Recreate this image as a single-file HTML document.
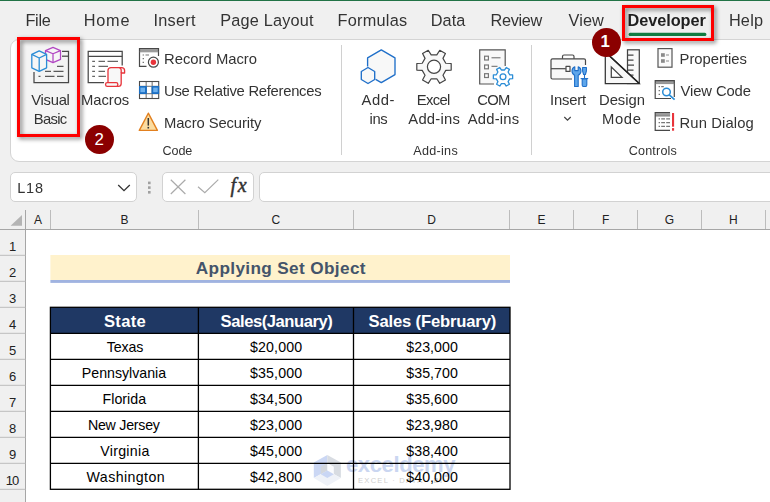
<!DOCTYPE html>
<html lang="en">
<head>
<meta charset="utf-8">
<title>Developer tab - Visual Basic</title>
<style>
html,body{margin:0;padding:0}
body{width:770px;height:502px;overflow:hidden;background:#f0f0f0;position:relative;font-family:"Liberation Sans",sans-serif;color:#333}
.abs{position:absolute}
.t{position:absolute;white-space:nowrap;line-height:1;font-size:14.8px}
#gfx{position:absolute;left:0;top:0;width:770px;height:502px}
.ribbon{left:10px;top:39px;width:790px;height:123px;background:#fff;border:1px solid #d4d4d4;border-radius:9px;box-sizing:border-box}
.box{background:#fff;border:1px solid #d2d2d2;border-radius:5px;box-sizing:border-box;top:172px;height:30px}
.sheet{left:26px;top:230px;width:744px;height:272px;background:#fff}
.red{border:3.3px solid #fe0000;box-sizing:border-box;filter:drop-shadow(2.2px 2.2px 2px rgba(0,0,0,.5))}
.circ{border-radius:50%;background:#8b0000;color:#fff;text-align:center;font-weight:400}
.gs{position:absolute;left:0;top:0;width:770px;height:206px;will-change:transform}
.wm{position:absolute;white-space:nowrap;line-height:1}
</style>
</head>
<body>
<div class="abs" style="left:0;top:0;width:770px;height:1.3px;background:#217346"></div>
<div class="abs ribbon"></div>
<div class="abs" style="left:20px;top:40px;width:57px;height:94px;background:#f4f4f4"></div>
<div class="abs box" style="left:10px;width:127px"></div>
<div class="abs box" style="left:162px;width:92px"></div>
<div class="abs box" style="left:259px;width:540px"></div>
<div class="abs sheet"></div>

<svg id="gfx" viewBox="0 0 770 502" fill="none">
<!-- tab underline -->
<rect x="628.6" y="32.8" width="77.8" height="3.1" rx="1.5" fill="#107c41"/>
<!-- group separators -->
<rect x="341" y="45" width="1" height="110" fill="#d0d0d0"/>
<rect x="531" y="45" width="1" height="110" fill="#d0d0d0"/>

<!-- Visual Basic icon -->
<g stroke="#484848" stroke-width="1.25">
<path d="M62 51.4H68.5V82.6H34V72"/>
<path d="M62 56.2H68.5"/>
<path d="M57 66.4H63.5M45 71.4H51M53.5 71.4H63.5M38.5 76.4H40.5M45 76.4H54.5M57 76.4H63.5" stroke="#5a5a5a"/>
</g>
<g stroke="#b146c2" stroke-width="1.25" stroke-linejoin="round" fill="#f6f6f6">
<path d="M53 47.4L60.5 50.6V59.4L53 62.6L45.5 59.4V50.6Z"/>
<path d="M45.5 50.6L53 53.8L60.5 50.6M53 53.8V62.6" fill="none"/>
</g>
<g stroke="#2b8dd6" stroke-width="1.3" stroke-linejoin="round" fill="#f6f6f6">
<path d="M39.2 50.8L46.6 54.4V67.8L39.2 71.4L31.8 67.8V54.4Z"/>
<path d="M31.8 54.4L39.2 58L46.6 54.4M39.2 58V71.4" fill="none"/>
</g>

<!-- Macros icon -->
<g stroke="#484848" stroke-width="1.25">
<path d="M104 82.7H88.2V51.3H122.2V65.5"/>
<path d="M88.2 56.3H122.2"/>
<path d="M92.2 61.4H95M98.5 61.4H105M107.5 61.4H118M92.2 66.4H95M98.5 66.4H108M92.2 71.4H95M98.5 71.4H105M92.2 76.4H95M98.5 76.4H106" stroke="#666"/>
</g>
<g stroke="#e8343b" stroke-width="1.3" stroke-linejoin="round" fill="#f8f8f8">
<path d="M108 82.7V70.5Q108 67.6 111 67.6H121.5Q124.6 67.6 124.6 70.5V73H121.2V83.5Q121.2 86.4 118.3 86.4H108.5"/>
<path d="M121.2 73V70.5Q121.2 67.6 119 67.6" fill="none"/>
<rect x="105.6" y="82.7" width="12.2" height="3.7" rx="1.6"/>
</g>

<!-- Record Macro icon -->
<g stroke="#484848" stroke-width="1.2">
<rect x="139.5" y="48.5" width="19" height="3" fill="#9a9a9a" stroke="none"/>
<path d="M146.5 66.3H139.5V48.5H158.5V56"/>
<path d="M139.5 51.8H158.5" stroke="#777" stroke-width="0.8"/>
<path d="M142.6 55H144M145.5 55H149M142.6 58.7H144M142.6 62.3H144" stroke="#777"/>
<circle cx="153.4" cy="62.2" r="5" fill="#fff"/>
<circle cx="153.4" cy="62.2" r="2.7" fill="#e8343b" stroke="none"/>
</g>

<!-- Relative references icon -->
<g>
<rect x="139.5" y="81.5" width="19.2" height="17" fill="#fff" stroke="#4a4a4a" stroke-width="1.1"/>
<path d="M146.2 82V98M152.2 82V98M140 86.4H158.5M140 93.7H158.5" stroke="#8c8c8c" stroke-width="1.3"/>
<rect x="139" y="86" width="7.9" height="8" fill="#1b6ec2"/>
<rect x="151.5" y="86" width="7.7" height="8" fill="#1b6ec2"/>
<rect x="140.4" y="87.6" width="4.6" height="4.6" fill="#6db1ee"/>
<rect x="153.2" y="87.6" width="4.5" height="4.6" fill="#6db1ee"/>
</g>

<!-- Macro security icon -->
<path d="M148.3 113.2L157.4 130.4H139.3Z" fill="#fbdca0" stroke="#e2801f" stroke-width="1.4" stroke-linejoin="round"/>
<path d="M148.3 118V125.6" stroke="#333" stroke-width="1.5"/>
<rect x="147.5" y="126.9" width="1.6" height="1.6" fill="#333"/>

<!-- Add-ins icon -->
<g stroke="#1f6fc9" stroke-width="1.35" stroke-linejoin="round" fill="#f8f8f8">
<path d="M381.3 82.6L395 74.6V57.9L381.3 49.9L367.6 57.9V74.6Z" stroke="none"/>
<path d="M375.6 79.4L381.3 82.6L395 74.6V57.9L381.3 49.9L367.6 57.9V66.6" fill="none"/>
<path d="M368 67.5L374.7 71.5V79.5L368 83.5L361.3 79.5V71.5Z"/>
</g>

<!-- Excel add-ins gear -->
<path d="M445.78 63.24 L451.19 63.52 L451.19 70.08 L445.78 70.36 L442.97 75.22 L445.43 80.05 L439.76 83.33 L436.81 78.78 L431.19 78.78 L428.24 83.33 L422.57 80.05 L425.03 75.22 L422.22 70.36 L416.81 70.08 L416.81 63.52 L422.22 63.24 L425.03 58.38 L422.57 53.55 L428.24 50.27 L431.19 54.82 L436.81 54.82 L439.76 50.27 L445.43 53.55 L442.97 58.38 Z" fill="#f8f8f8" stroke="#444" stroke-width="1.2" stroke-linejoin="round"/>
<circle cx="434" cy="66.8" r="6.6" fill="#fff" stroke="#444" stroke-width="1.2"/>

<!-- COM add-ins -->
<g stroke="#555" stroke-width="1.2">
<path d="M494 84H479.7V49.8H505.2V66" fill="#f8f8f8"/>
<path d="M491.5 57.8H500.5M491.5 66.3H497.5" stroke="#666" stroke-width="1"/>
<rect x="484.6" y="56.2" width="3.8" height="3.8" stroke="#777" fill="#fff"/>
<rect x="484.6" y="65" width="3.8" height="3.8" stroke="#777" fill="#fff"/>
<rect x="484.6" y="73.7" width="3.8" height="3.8" stroke="#777" fill="#fff"/>
</g>
<path d="M509.70 74.78 L512.63 74.96 L512.63 78.64 L509.70 78.82 L508.10 81.59 L509.40 84.22 L506.22 86.05 L504.60 83.62 L501.40 83.62 L499.78 86.05 L496.60 84.22 L497.90 81.59 L496.30 78.82 L493.37 78.64 L493.37 74.96 L496.30 74.78 L497.90 72.01 L496.60 69.38 L499.78 67.55 L501.40 69.98 L504.60 69.98 L506.22 67.55 L509.40 69.38 L508.10 72.01 Z" fill="#fff" stroke="#2b8dd6" stroke-width="1.3" stroke-linejoin="round"/>
<circle cx="503" cy="76.8" r="2.9" fill="#fff" stroke="#2b8dd6" stroke-width="1.3"/>

<!-- Insert (toolbox) -->
<g stroke="#484848" stroke-width="1.2" stroke-linejoin="round">
<path d="M572 79H552.5Q551 79 551 77.5V60.3Q551 58.8 552.5 58.8H584Q585.5 58.8 585.5 60.3V65" fill="#f8f8f8"/>
<path d="M562.5 58.8V56.5Q562.5 55 564 55H572.5Q574 55 574 56.5V58.8"/>
<path d="M551 68.7H565.8"/>
<rect x="566" y="66.4" width="4" height="5" fill="#fff"/>
</g>
<g stroke="#1f6fc9" stroke-width="1.1" fill="#5ea6ea" stroke-linejoin="round">
<path d="M574.6 86.5V75.2Q572 74 572 71Q572 68 574.8 66.8V70.6H578.2V66.8Q581 68 581 71Q581 74 578.2 75.2V86.5Z"/>
<path d="M582.6 67.5H586.4V71L585.4 74.5H583.6L582.6 71Z"/>
<path d="M584.5 74.5V78.5" />
<path d="M580.6 78.6H588.2"/>
<path d="M582.2 79V85Q582.2 86.5 583.4 86.5H585.6Q586.8 86.5 586.8 85V79Z"/>
</g>

<!-- Design mode -->
<g stroke="#444" stroke-width="1.25">
<rect x="627.5" y="49.8" width="11.8" height="33.7" fill="#f8f8f8"/>
<path d="M627.5 55H633.5M627.5 60H633.5M627.5 65H634M627.5 70H633.5M627.5 75H633.5"/>
<path d="M605.3 52V83.5H639.3Z" fill="#f8f8f8" stroke="#333"/>
<path d="M605.3 52L639.3 83.5" stroke="#222" stroke-width="1.6"/>
<path d="M611.3 67V77.3H622Z" fill="#fff"/>
</g>

<!-- Properties icon -->
<rect x="658" y="48.6" width="14" height="18.6" fill="#fafafa" stroke="#555" stroke-width="1.2"/>
<rect x="661" y="53.2" width="3.8" height="3.6" fill="#8a8a8a"/>
<rect x="661" y="59.2" width="3.8" height="3.6" fill="#8a8a8a"/>
<path d="M666 55H669M666 61H669" stroke="#8a8a8a" stroke-width="1.2"/>

<!-- View code icon -->
<g stroke="#484848" stroke-width="1.2">
<rect x="655.2" y="80.6" width="19.1" height="2.8" fill="#9a9a9a" stroke="none"/>
<path d="M671 98.5H655.2V80.6H674.3V97"/>
<path d="M655.2 83.6H674.3" stroke="#777" stroke-width="0.8"/>
<path d="M658.6 86.6H660M661.2 86.6H663.8M658.6 90.7H660M658.6 94.3H660" stroke="#777"/>
<circle cx="666.5" cy="92" r="3.8" fill="#fff" stroke="#2b8dd6" stroke-width="1.5"/>
<path d="M669.3 94.8L674.6 99.6" stroke="#2b8dd6" stroke-width="1.7"/>
</g>

<!-- Run dialog icon -->
<g stroke="#484848" stroke-width="1.2">
<rect x="655.2" y="112.5" width="14.9" height="2.8" fill="#9a9a9a" stroke="none"/>
<path d="M670 112.5H655.2V130.4H670"/>
<path d="M655.2 115.9H670.1" stroke-width="0.9"/>
<path d="M658.6 118.9H660M661.2 118.9H665M666.2 118.9H670M658.6 122.7H660M661.2 122.7H665M666.2 122.7H670M658.6 126.3H660M661.2 126.3H665M666.2 126.3H670" stroke="#777"/>
<rect x="672" y="113" width="2.1" height="13.7" fill="#e8343b" stroke="none"/>
<rect x="672" y="128.1" width="2.1" height="2.6" fill="#e8343b" stroke="none"/>
</g>

<!-- Insert chevron -->
<path d="M564.3 117L567.5 120.2L570.7 117" stroke="#444" stroke-width="1.2"/>

<!-- name box chevron -->
<path d="M118.2 185L124 190.7L129.8 185" stroke="#333" stroke-width="1.3"/>
<!-- dots -->
<rect x="148" y="181.6" width="2.6" height="2.6" fill="#a0a0a0"/>
<rect x="148" y="186.3" width="2.6" height="2.6" fill="#a0a0a0"/>
<rect x="148" y="191" width="2.6" height="2.6" fill="#a0a0a0"/>
<!-- cancel / enter -->
<path d="M170.8 179.8L185.4 194M185.4 179.8L170.8 194" stroke="#ababab" stroke-width="1.2"/>
<path d="M198 186.8L204.8 192.6L218.3 179.6" stroke="#ababab" stroke-width="1.2"/>

<!-- sheet headers -->
<rect x="0" y="229" width="770" height="1" fill="#a6a6a6"/>
<rect x="25" y="210" width="1" height="292" fill="#a6a6a6"/>
<path d="M22 215V225.8H10.6Z" fill="#b4b4b4"/>
<g fill="#bcbcbc">
<rect x="50" y="210" width="1" height="19"/>
<rect x="198" y="210" width="1" height="19"/>
<rect x="353" y="210" width="1" height="19"/>
<rect x="509" y="210" width="1" height="19"/>
<rect x="573" y="210" width="1" height="19"/>
<rect x="637" y="210" width="1" height="19"/>
<rect x="701" y="210" width="1" height="19"/>
<rect x="765" y="210" width="1" height="19"/>
<rect x="0" y="254.8" width="25.5" height="1"/><rect x="0" y="280.8" width="25.5" height="1"/><rect x="0" y="306.8" width="25.5" height="1"/><rect x="0" y="332.8" width="25.5" height="1"/><rect x="0" y="358.8" width="25.5" height="1"/><rect x="0" y="384.8" width="25.5" height="1"/><rect x="0" y="410.8" width="25.5" height="1"/><rect x="0" y="436.8" width="25.5" height="1"/><rect x="0" y="462.8" width="25.5" height="1"/><rect x="0" y="488.8" width="25.5" height="1"/>
</g>

<!-- title cell -->
<rect x="50.4" y="255" width="459.6" height="25.2" fill="#fff2cc"/>
<rect x="50.4" y="280" width="459.6" height="2.9" fill="#a0b3e0"/>

<!-- watermark logo -->
<g>
<path d="M327.3 455L313.8 462.5V478L327.3 470.5Z" fill="#cbd7f4"/>
<path d="M327.3 455L340.9 462.5V478L327.3 470.5Z" fill="#d8dce2"/>
<path d="M313.8 478L327.3 470.5L340.9 478L327.3 486Z" fill="#eff2f8"/>
<path d="M320.8 466.7L327.3 463V470.5L320.8 474.2Z" fill="#d3d7dd"/>
<path d="M327.3 463L333.8 466.7V474.2L327.3 470.5Z" fill="#fbfcfe"/>
<path d="M320.8 474.2L327.3 470.5L333.8 474.2L327.3 478Z" fill="#c9d6f4"/>
</g>

</svg>

<!-- watermark -->
<span class="wm" style="left:346px;top:454.2px;font-size:22px;font-weight:700;color:#cad6f1;letter-spacing:-0.38px">exceldemy</span>
<span class="wm" style="left:358px;top:476.6px;font-size:7.6px;color:#cfcfcf;letter-spacing:1.25px">EXCEL · DATA · BI</span>

<svg class="abs" style="left:0;top:0;width:770px;height:502px" viewBox="0 0 770 502" fill="none">
<rect x="50.4" y="307.3" width="459.6" height="26" fill="#1f3864"/>
<g stroke="#000" stroke-width="1.3">
<rect x="50.4" y="307.3" width="459.6" height="182"/>
<path d="M198.4 307.3V489.3M353.5 307.3V489.3"/>
<path d="M50.4 333.3H510M50.4 359.3H510M50.4 385.3H510M50.4 411.3H510M50.4 437.3H510M50.4 463.3H510"/>
</g>

</svg>

<!-- annotation boxes -->
<div class="abs red" style="left:16.9px;top:37px;width:63.3px;height:99.6px"></div>
<div class="abs red" style="left:622px;top:5px;width:92px;height:35.6px"></div>
<div class="abs circ" style="left:592px;top:27.8px;width:29.2px;height:29.2px"></div>
<div class="abs circ" style="left:84.9px;top:124.9px;width:29.3px;height:29.3px"></div>
<span class="t" style="left:600.6px;top:33.8px;font-size:16.8px;font-weight:700;color:#fff">1</span>
<span class="t" style="left:94.5px;top:131.5px;font-size:16.9px;color:#fff">2</span>

<span class="t" style="left:230.6px;top:174.9px;font-size:20px;font-family:'Liberation Serif',serif;font-style:italic;color:#333;letter-spacing:1.6px;-webkit-text-stroke:0.45px #333">fx</span>

<div class="gs">
<span class="t" style="left:25.50px;top:12.15px;font-size:16.3px;letter-spacing:-0.327px;">File</span>
<span class="t" style="left:83.70px;top:12.15px;font-size:16.3px;letter-spacing:0.808px;">Home</span>
<span class="t" style="left:153.40px;top:12.15px;font-size:16.3px;letter-spacing:0.281px;">Insert</span>
<span class="t" style="left:220.30px;top:12.15px;font-size:16.3px;letter-spacing:0.169px;">Page Layout</span>
<span class="t" style="left:337.50px;top:12.15px;font-size:16.3px;letter-spacing:0.256px;">Formulas</span>
<span class="t" style="left:430.80px;top:12.15px;font-size:16.3px;letter-spacing:0.055px;">Data</span>
<span class="t" style="left:490.60px;top:12.15px;font-size:16.3px;letter-spacing:-0.325px;">Review</span>
<span class="t" style="left:568.60px;top:12.15px;font-size:16.3px;letter-spacing:0.054px;">View</span>
<span class="t" style="left:627.60px;top:12.15px;font-size:16.3px;font-weight:700;color:#1f1f1f;letter-spacing:-0.074px;">Developer</span>
<span class="t" style="left:728.90px;top:12.15px;font-size:16.3px;letter-spacing:0.223px;">Help</span>
<span class="t" style="left:31.20px;top:92.90px;font-size:14.8px;letter-spacing:-0.269px;">Visual</span>
<span class="t" style="left:33.80px;top:111.90px;font-size:14.8px;letter-spacing:-0.696px;">Basic</span>
<span class="t" style="left:81.00px;top:92.90px;font-size:14.8px;letter-spacing:-0.062px;">Macros</span>
<span class="t" style="left:164.00px;top:51.90px;font-size:14.8px;letter-spacing:0.010px;">Record Macro</span>
<span class="t" style="left:164.00px;top:83.90px;font-size:14.8px;letter-spacing:-0.276px;">Use Relative References</span>
<span class="t" style="left:164.00px;top:115.90px;font-size:14.8px;letter-spacing:-0.098px;">Macro Security</span>
<span class="t" style="left:162.50px;top:145.00px;font-size:12.6px;letter-spacing:-0.101px;">Code</span>
<span class="t" style="left:361.40px;top:92.90px;font-size:14.8px;letter-spacing:0.624px;">Add-</span>
<span class="t" style="left:369.50px;top:111.90px;font-size:14.8px;letter-spacing:-0.358px;">ins</span>
<span class="t" style="left:416.80px;top:92.90px;font-size:14.8px;letter-spacing:-0.674px;">Excel</span>
<span class="t" style="left:408.30px;top:111.90px;font-size:14.8px;letter-spacing:0.238px;">Add-ins</span>
<span class="t" style="left:477.30px;top:92.90px;font-size:14.8px;letter-spacing:-0.748px;">COM</span>
<span class="t" style="left:467.70px;top:111.90px;font-size:14.8px;letter-spacing:0.205px;">Add-ins</span>
<span class="t" style="left:413.20px;top:145.00px;font-size:12.6px;letter-spacing:0.299px;">Add-ins</span>
<span class="t" style="left:550.00px;top:92.90px;font-size:14.8px;letter-spacing:-0.179px;">Insert</span>
<span class="t" style="left:599.00px;top:92.90px;font-size:14.8px;letter-spacing:-0.026px;">Design</span>
<span class="t" style="left:602.00px;top:111.90px;font-size:14.8px;letter-spacing:0.638px;">Mode</span>
<span class="t" style="left:679.50px;top:51.90px;font-size:14.8px;letter-spacing:0.007px;">Properties</span>
<span class="t" style="left:680.50px;top:83.90px;font-size:14.8px;letter-spacing:-0.108px;">View Code</span>
<span class="t" style="left:679.50px;top:115.90px;font-size:14.8px;letter-spacing:0.114px;">Run Dialog</span>
<span class="t" style="left:628.80px;top:145.00px;font-size:12.6px;letter-spacing:0.157px;">Controls</span>
<span class="t" style="left:17.20px;top:181.05px;font-size:14.5px;letter-spacing:0.836px;">L18</span>
</div>
<span class="t" style="left:34.00px;top:214.30px;font-size:12px;color:#222222;">A</span>
<span class="t" style="left:120.40px;top:214.30px;font-size:12px;color:#222222;">B</span>
<span class="t" style="left:271.50px;top:214.30px;font-size:12px;color:#222222;">C</span>
<span class="t" style="left:427.20px;top:214.30px;font-size:12px;color:#222222;">D</span>
<span class="t" style="left:537.60px;top:214.30px;font-size:12px;color:#222222;">E</span>
<span class="t" style="left:602.10px;top:214.30px;font-size:12px;color:#222222;">F</span>
<span class="t" style="left:664.80px;top:214.30px;font-size:12px;color:#222222;">G</span>
<span class="t" style="left:729.00px;top:214.30px;font-size:12px;color:#222222;">H</span>
<span class="t" style="left:8.90px;top:240.30px;font-size:13px;color:#222222;">1</span>
<span class="t" style="left:8.90px;top:266.30px;font-size:13px;color:#222222;">2</span>
<span class="t" style="left:8.90px;top:292.30px;font-size:13px;color:#222222;">3</span>
<span class="t" style="left:8.90px;top:318.30px;font-size:13px;color:#222222;">4</span>
<span class="t" style="left:8.90px;top:344.30px;font-size:13px;color:#222222;">5</span>
<span class="t" style="left:8.90px;top:370.30px;font-size:13px;color:#222222;">6</span>
<span class="t" style="left:8.90px;top:396.30px;font-size:13px;color:#222222;">7</span>
<span class="t" style="left:8.90px;top:422.30px;font-size:13px;color:#222222;">8</span>
<span class="t" style="left:8.90px;top:448.30px;font-size:13px;color:#222222;">9</span>
<span class="t" style="left:5.70px;top:474.30px;font-size:13px;color:#222222;letter-spacing:-0.830px;">10</span>
<span class="t" style="left:195.80px;top:259.70px;font-size:17.2px;font-weight:700;color:#44546a;letter-spacing:0.357px;">Applying Set Object</span>
<span class="t" style="left:104.00px;top:313.50px;font-size:16.6px;font-weight:700;color:#fff;letter-spacing:0.288px;">State</span>
<span class="t" style="left:220.60px;top:313.50px;font-size:16.6px;font-weight:700;color:#fff;letter-spacing:-0.449px;">Sales(January)</span>
<span class="t" style="left:368.50px;top:313.50px;font-size:16.6px;font-weight:700;color:#fff;letter-spacing:-0.154px;">Sales (February)</span>
<span class="t" style="left:106.70px;top:340.20px;font-size:14.2px;color:#000;letter-spacing:-0.092px;">Texas</span>
<span class="t" style="left:250.00px;top:340.20px;font-size:14.2px;color:#000;letter-spacing:0.151px;">$20,000</span>
<span class="t" style="left:406.30px;top:340.20px;font-size:14.2px;color:#000;letter-spacing:0.051px;">$23,000</span>
<span class="t" style="left:81.80px;top:366.20px;font-size:14.2px;color:#000;letter-spacing:-0.009px;">Pennsylvania</span>
<span class="t" style="left:250.00px;top:366.20px;font-size:14.2px;color:#000;letter-spacing:0.151px;">$35,000</span>
<span class="t" style="left:406.30px;top:366.20px;font-size:14.2px;color:#000;letter-spacing:0.051px;">$35,700</span>
<span class="t" style="left:102.50px;top:392.20px;font-size:14.2px;color:#000;letter-spacing:0.037px;">Florida</span>
<span class="t" style="left:250.00px;top:392.20px;font-size:14.2px;color:#000;letter-spacing:0.151px;">$34,500</span>
<span class="t" style="left:406.30px;top:392.20px;font-size:14.2px;color:#000;letter-spacing:0.051px;">$35,600</span>
<span class="t" style="left:87.90px;top:418.20px;font-size:14.2px;color:#000;letter-spacing:-0.235px;">New Jersey</span>
<span class="t" style="left:250.00px;top:418.20px;font-size:14.2px;color:#000;letter-spacing:0.151px;">$23,000</span>
<span class="t" style="left:406.30px;top:418.20px;font-size:14.2px;color:#000;letter-spacing:0.051px;">$23,980</span>
<span class="t" style="left:100.30px;top:444.20px;font-size:14.2px;color:#000;letter-spacing:0.276px;">Virginia</span>
<span class="t" style="left:250.00px;top:444.20px;font-size:14.2px;color:#000;letter-spacing:0.151px;">$45,000</span>
<span class="t" style="left:406.30px;top:444.20px;font-size:14.2px;color:#000;letter-spacing:0.051px;">$38,400</span>
<span class="t" style="left:86.60px;top:470.20px;font-size:14.2px;color:#000;letter-spacing:0.400px;">Washington</span>
<span class="t" style="left:250.00px;top:470.20px;font-size:14.2px;color:#000;letter-spacing:0.151px;">$42,800</span>
<span class="t" style="left:406.30px;top:470.20px;font-size:14.2px;color:#000;letter-spacing:0.051px;">$40,000</span>
</body>
</html>
